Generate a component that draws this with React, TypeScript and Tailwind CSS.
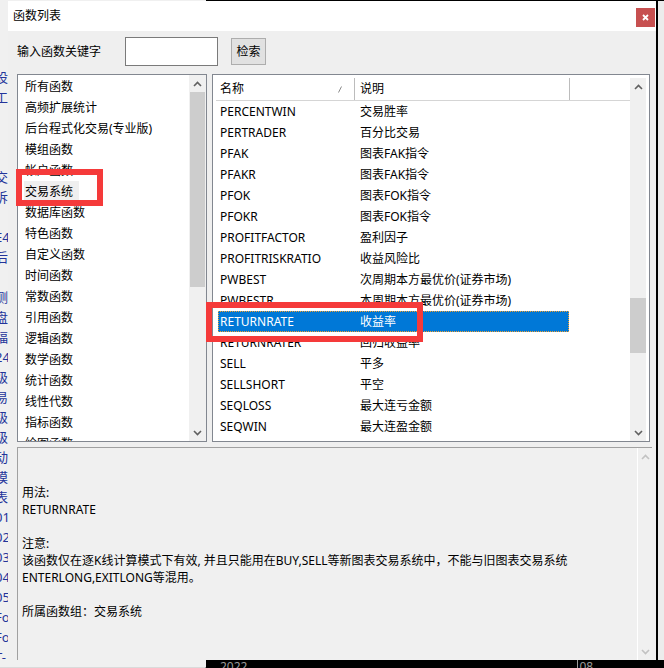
import React from "react";

const categories = [
  "所有函数",
  "高频扩展统计",
  "后台程式化交易(专业版)",
  "模组函数",
  "帐户函数",
  "交易系统",
  "数据库函数",
  "特色函数",
  "自定义函数",
  "时间函数",
  "常数函数",
  "引用函数",
  "逻辑函数",
  "数学函数",
  "统计函数",
  "线性代数",
  "指标函数",
  "绘图函数",
];

const rows: [string, string][] = [
  ["PERCENTWIN", "交易胜率"],
  ["PERTRADER", "百分比交易"],
  ["PFAK", "图表FAK指令"],
  ["PFAKR", "图表FAK指令"],
  ["PFOK", "图表FOK指令"],
  ["PFOKR", "图表FOK指令"],
  ["PROFITFACTOR", "盈利因子"],
  ["PROFITRISKRATIO", "收益风险比"],
  ["PWBEST", "次周期本方最优价(证券市场)"],
  ["PWBESTR", "本周期本方最优价(证券市场)"],
  ["RETURNRATE", "收益率"],
  ["RETURNRATER", "回归收益率"],
  ["SELL", "平多"],
  ["SELLSHORT", "平空"],
  ["SEQLOSS", "最大连亏金额"],
  ["SEQWIN", "最大连盈金额"],
];

const sideFragments = [
  "设计", "工具箱", "", "", "", "交易", "诉", "", "E4", "后台", "",
  "测试", "盘", "福", "24", "级", "易", "级", "级", "动", "模", "表",
  "01", "02", "03", "04", "05", "Fo", "Fo", "T-",
];

function Chev({ up, color }: { up: boolean; color: string }) {
  return (
    <svg width="9" height="6" viewBox="0 0 9 6">
      <polyline
        points={up ? "1,5 4.5,1.5 8,5" : "1,1 4.5,4.5 8,1"}
        fill="none"
        stroke={color}
        strokeWidth="1.6"
      />
    </svg>
  );
}

export default function App() {
  return (
    <div className="relative h-[668px] w-[664px] overflow-hidden bg-black font-['Noto_Sans','Noto_Sans_CJK_SC',sans-serif] text-[12px] text-black">
      {/* background desktop */}
      <div className="flex h-full w-full">
        <div className="flex h-full w-[206px] flex-col bg-[#f0f0f0]">
          <div className="flex flex-1 flex-col pt-[67px] text-[13px] text-[#23349a]">
            {sideFragments.map((t, i) => (
              <div key={i} className="-ml-[5px] h-[20px] whitespace-nowrap leading-[20px]">
                {t}
              </div>
            ))}
          </div>
          <div className="flex h-[8px] items-start border-r border-[#9a9a9a] bg-[#dadada] pl-[168px] text-[12px] leading-[10px] text-[#555]">
            &gt;
          </div>
        </div>
        <div className="flex flex-1 flex-col">
          <div className="h-[1px] bg-black" />
          <div className="flex flex-1">
            <div className="flex-1 bg-black" />
            <div className="w-[6px] bg-[#ececec]" />
          </div>
          <div className="flex h-[8px] items-start text-[12px] leading-[14px] text-[#9a9a9a]">
            <div className="pl-[14px]">2022</div>
            <div className="ml-[330px] h-full border-l border-[#9a9a9a] pl-[1px]">08</div>
          </div>
        </div>
      </div>

      {/* dialog window */}
      <div className="absolute left-[8px] top-[1px] flex h-[659px] w-[650px] flex-col border-r-2 border-black bg-[#efefef]">
        {/* title bar */}
        <div className="flex h-[30px] items-start justify-between bg-white">
          <div className="pl-[5px] pt-[6px] text-[12px] leading-[18px]">函数列表</div>
          <div className="mr-[1px] mt-[7px] flex h-[19px] w-[19px] items-center justify-center bg-[#c75050]">
            <svg width="7" height="7" viewBox="0 0 7 7">
              <path d="M1 1 L6 6 M6 1 L1 6" stroke="white" strokeWidth="1.8" />
            </svg>
          </div>
        </div>

        {/* body */}
        <div className="flex flex-1 flex-col pl-[9px]">
          {/* search row */}
          <div className="flex h-[41px] items-center">
            <div className="w-[108px] leading-[18px]">输入函数关键字</div>
            <div className="h-[29px] w-[93px] border border-[#7a7a7a] bg-white" />
            <div className="ml-[13px] flex h-[27px] w-[35px] items-center justify-center border border-[#adadad] bg-[#e1e1e1]">
              检索
            </div>
          </div>

          {/* lists */}
          <div className="mt-[2px] flex h-[368px] gap-[5px]">
            {/* left category list */}
            <div className="flex h-[368px] w-[190px] border border-[#828790] bg-white">
              <div className="flex flex-1 flex-col overflow-hidden pl-[6px] pt-[1px]">
                {categories.map((c) => (
                  <div key={c} className="flex h-[21px] shrink-0 items-center whitespace-nowrap">
                    <span
                      className={
                        c === "交易系统"
                          ? "flex h-[21px] w-[55px] items-center bg-[#efefef] pl-[1px]"
                          : "pl-[1px]"
                      }
                    >
                      {c}
                    </span>
                  </div>
                ))}
              </div>
              <div className="flex w-[17px] flex-col bg-[#f0f0f0]">
                <div className="flex h-[17px] items-center justify-center">
                  <Chev up color="#606060" />
                </div>
                <div className="mx-[1px] h-[195px] bg-[#cdcdcd]" />
                <div className="flex-1" />
                <div className="flex h-[17px] items-center justify-center">
                  <Chev up={false} color="#606060" />
                </div>
              </div>
            </div>

            {/* right function list */}
            <div className="flex h-[368px] w-[438px] border border-[#828790] bg-white pl-[3px] pr-[3px] pt-[3px]">
              <div className="flex flex-1 flex-col overflow-hidden">
                <div className="flex h-[23px] shrink-0 border-b border-[#d5d5d5] bg-white">
                  <div className="flex w-[139px] items-center justify-between border-r border-[#bcbcbc] pl-[4px] pr-[12px]">
                    <span>名称</span>
                    <svg width="4" height="7" viewBox="0 0 4 7">
                      <path d="M0.5 6.5 L3.5 0.5" stroke="#8a8a8a" strokeWidth="1" />
                    </svg>
                  </div>
                  <div className="flex w-[215px] items-center border-r border-[#bcbcbc] pl-[5px]">说明</div>
                </div>
                {rows.map(([name, desc]) => {
                  const sel = name === "RETURNRATE";
                  return (
                    <div key={name} className="flex h-[21px] shrink-0 items-center">
                      <div
                        className={
                          sel
                            ? "ml-[2px] flex h-[21px] w-[351px] items-center whitespace-nowrap bg-[#0078d7] text-white outline-1 -outline-offset-1 outline-dotted outline-[#f0a030]"
                            : "ml-[2px] flex h-[21px] w-[351px] items-center whitespace-nowrap"
                        }
                      >
                        <div className="w-[137px] pl-[2px]">{name}</div>
                        <div className="pl-[5px]">{desc}</div>
                      </div>
                    </div>
                  );
                })}
              </div>
              <div className="flex w-[16px] flex-col bg-[#f0f0f0]">
                <div className="flex h-[17px] items-center justify-center">
                  <Chev up color="#606060" />
                </div>
                <div className="mt-[203px] h-[55px] bg-[#cdcdcd]" />
                <div className="flex-1" />
                <div className="flex h-[17px] items-center justify-center">
                  <Chev up={false} color="#606060" />
                </div>
              </div>
            </div>
          </div>

          {/* description panel */}
          <div className="mt-[5px] flex h-[213px] w-[635px] border-l border-t border-[#a0a0a0] bg-[#f0f0f0]">
            <div className="flex-1 whitespace-nowrap pl-[4px] pt-[36px] leading-[17px]">
              <div>用法:</div>
              <div>RETURNRATE</div>
              <div className="h-[17px]" />
              <div>注意:</div>
              <div>该函数仅在逐K线计算模式下有效, 并且只能用在BUY,SELL等新图表交易系统中，不能与旧图表交易系统</div>
              <div>ENTERLONG,EXITLONG等混用。</div>
              <div className="h-[17px]" />
              <div>所属函数组：交易系统</div>
            </div>
            <div className="flex w-[15px] flex-col border-l border-white">
              <div className="flex h-[17px] items-center justify-center">
                <Chev up color="#c2c2c2" />
              </div>
              <div className="flex-1" />
              <div className="flex h-[17px] items-center justify-center">
                <Chev up={false} color="#c2c2c2" />
              </div>
            </div>
          </div>
        </div>
      </div>

      {/* annotation boxes */}
      <div className="absolute left-[16px] top-[169px] h-[37px] w-[87px] border-[6px] border-[#f53a3a]" />
      <div className="absolute left-[206px] top-[302px] h-[40px] w-[217px] border-[6px] border-[#f53a3a]" />
    </div>
  );
}
